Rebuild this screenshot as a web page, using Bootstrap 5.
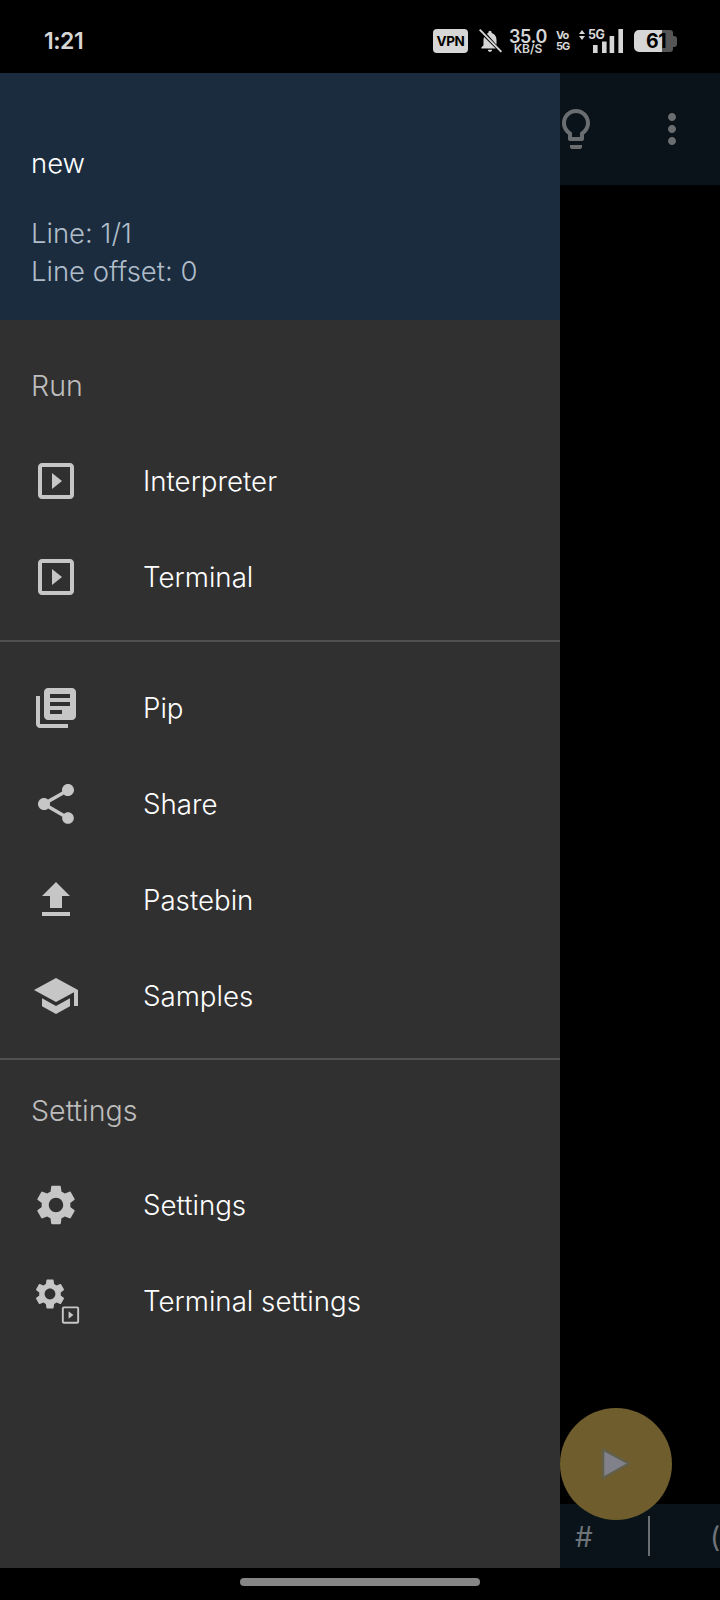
<!DOCTYPE html>
<html lang="en">
<head>
    <meta charset="UTF-8">
    <meta name="viewport" content="width=device-width, initial-scale=1.0">
    <title>Drawer</title>
    <link href="https://cdn.jsdelivr.net/npm/bootstrap@5.3.0/dist/css/bootstrap.min.css" rel="stylesheet">
    <style>
        html, body { background: #000; }
        body { font-family: Inter, "Liberation Sans", sans-serif; }
        .phone { width: 720px; height: 1600px; overflow: hidden; background: #000; }
        .status-bar { height: 73px; padding: 9px 43px 0 44px; color: #d6d6d6; }
        .clock { font-size: 23px; font-weight: 600; letter-spacing: -.5px; }
        .vpn-tag { width: 35px; height: 24px; margin-right: 9px; background: #d6d6d6; color: #000; border-radius: 4px; font-size: 13.5px; font-weight: 700; letter-spacing: -.3px; line-height: 24px; text-align: center; }
        .bell-off { margin-right: 6px; }
        .speed { width: 38px; margin-right: 9px; text-align: center; font-weight: 600; white-space: nowrap; }
        .speed-num { font-size: 18px; line-height: 15px; letter-spacing: -.4px; }
        .speed-unit { font-size: 12px; line-height: 10px; }
        .volte { width: 12px; margin-right: 11px; font-size: 11px; font-weight: 700; letter-spacing: -1px; line-height: 11px; text-align: center; white-space: nowrap; }
        .net-arrows { margin: 0 3px 12px 0; }
        .net-type { width: 16px; margin: 0 -11px 13px 0; font-size: 12.500px; font-weight: 700; letter-spacing: -.6px; line-height: 11px; white-space: nowrap; }
        .batt { width: 39px; height: 22px; margin-left: 11px; border-radius: 5px 3px 3px 5px; background: linear-gradient(90deg, #d6d6d6 72%, #555 72%); color: #000; font-size: 19.500px; font-weight: 700; line-height: 22px; padding-left: 12px; letter-spacing: -.5px; }
        .batt-nub { width: 4px; height: 11px; background: #555; border-radius: 0 3px 3px 0; }
        .drawer { width: 560px; background: #303030; }
        .drawer-head { height: 247px; padding: 73px 31px 0; background: #1a2c3e; color: #fff; }
        .drawer-title { font-size: 27.500px; font-weight: 300; line-height: 34px; margin-bottom: 34px; }
        .drawer-info { font-size: 27.500px; font-weight: 300; line-height: 38px; color: #b0bcc9; }
        .sub-label { font-size: 28.600px; font-weight: 300; color: #bdbdbd; padding-left: 31px; line-height: 34px; }
        .run-label { padding-top: 49px; padding-bottom: 30px; }
        .settings-label { padding-top: 34px; padding-bottom: 29px; }
        .menu-row { height: 96px; padding-left: 32px; color: #fff; font-size: 27.700px; font-weight: 350; }
        .menu-row > svg { width: 48px; height: 48px; margin-right: 63px; fill: #c6c6c6; flex: none; }
        .menu-row > span { padding-top: 2px; }
        .rule-line { height: 2px; background: #505050; }
        .rule-run { margin: 15px 0 18px; }
        .rule-tools { margin: 14px 0 0; }
        .side-col { width: 160px; }
        .side-bar { height: 112px; background: #0a1319; }
        .side-bar svg { width: 48px; height: 48px; fill: #6b6e71; position: absolute; top: 32px; }
        .bulb { left: -8px; }
        .dots { left: 88px; }
        .key-bar { height: 64px; background: #0a1319; color: #6e7378; font-size: 28px; overflow: hidden; }
        .key-hash { position: absolute; left: 15px; top: 15px; line-height: 36px; }
        .key-sep { position: absolute; left: 88px; top: 12px; width: 2px; height: 40px; background: #6a6f74; }
        .key-paren { position: absolute; left: 150px; top: 15px; line-height: 36px; }
        .run-fab { position: absolute; left: 0; bottom: 48px; width: 112px; height: 112px; border-radius: 50%; background: #6f5d2e; }
        .run-fab svg { width: 48px; height: 48px; }
        .gesture-zone { height: 32px; padding-bottom: 4px; }
        .gesture-pill { width: 240px; height: 8px; border-radius: 4px; background: #868686; }
    </style>
</head>
<body>
    <div class="phone d-flex flex-column">
        <!-- status bar -->
        <div class="status-bar d-flex align-items-center justify-content-between">
            <span class="clock">1:21</span>
            <div class="d-flex align-items-center">
                <span class="vpn-tag">VPN</span>
                <svg class="bell-off" width="26" height="26" viewBox="0 0 24 24" fill="#d6d6d6"><path d="M12 22c1.100 0 2-.9 2-2h-4c0 1.100.9 2 2 2zM18 16v-5c0-3.100-1.600-5.600-4.500-6.300V4c0-.8-.7-1.500-1.500-1.500s-1.500.7-1.500 1.500v.7c-.5.1-1 .3-1.400.6L18 15.500V16zM6.500 8.200C6.200 9.100 6 10 6 11v5l-2 2v1h13.300z"/><path d="M2.500 1.500L22.500 22" stroke="#d6d6d6" stroke-width="1.800"/></svg>
                <div class="speed d-flex flex-column"><span class="speed-num">35.0</span><span class="speed-unit">KB/S</span></div>
                <div class="volte d-flex flex-column"><span>Vo</span><span>5G</span></div>
                <svg class="net-arrows" width="6" height="10" viewBox="0 0 6 10" fill="#d6d6d6"><path d="M3 0l3 4H0zM3 10L0 6h6z"/></svg>
                <span class="net-type">5G</span>
                <svg width="30" height="24" viewBox="0 0 30 24" fill="#d6d6d6"><rect x="0" y="16" width="4.600" height="8"/><rect x="9" y="12.500" width="4.600" height="11.500"/><rect x="16.600" y="7" width="4.600" height="17"/><rect x="25.400" y="0" width="4.600" height="24"/></svg>
                <div class="batt">61</div>
                <div class="batt-nub"></div>
            </div>
        </div>

        <div class="d-flex flex-grow-1">
            <!-- drawer -->
            <div class="drawer d-flex flex-column">
                <div class="drawer-head">
                    <div class="drawer-title">new</div>
                    <div class="drawer-info">Line: 1/1</div>
                    <div class="drawer-info">Line offset: 0</div>
                </div>

                <div class="sub-label run-label">Run</div>
                <div class="menu-row d-flex align-items-center">
                    <svg viewBox="0 0 24 24"><path d="M10 8v8l5-4-5-4zm9-5H5c-1.100 0-2 .9-2 2v14c0 1.100.9 2 2 2h14c1.100 0 2-.9 2-2V5c0-1.100-.9-2-2-2zm0 16H5V5h14v14z"/></svg>
                    <span>Interpreter</span>
                </div>
                <div class="menu-row d-flex align-items-center">
                    <svg viewBox="0 0 24 24"><path d="M10 8v8l5-4-5-4zm9-5H5c-1.100 0-2 .9-2 2v14c0 1.100.9 2 2 2h14c1.100 0 2-.9 2-2V5c0-1.100-.9-2-2-2zm0 16H5V5h14v14z"/></svg>
                    <span>Terminal</span>
                </div>
                <div class="rule-line rule-run"></div>

                <div class="menu-row d-flex align-items-center">
                    <svg viewBox="0 0 24 24"><path d="M4 6H2v14c0 1.100.9 2 2 2h14v-2H4V6zm16-4H8c-1.100 0-2 .9-2 2v12c0 1.100.9 2 2 2h12c1.100 0 2-.9 2-2V4c0-1.100-.9-2-2-2zm-1 9H9V9h10v2zm-4 4H9v-2h6v2zm4-8H9V5h10v2z"/></svg>
                    <span>Pip</span>
                </div>
                <div class="menu-row d-flex align-items-center">
                    <svg viewBox="0 0 24 24"><path d="M18 16.080c-.76 0-1.440.3-1.960.77L8.910 12.700c.05-.23.09-.46.09-.7s-.04-.47-.09-.7l7.050-4.110c.54.5 1.250.81 2.040.81 1.660 0 3-1.340 3-3s-1.340-3-3-3-3 1.340-3 3c0 .24.04.47.09.7L8.040 9.810C7.500 9.310 6.790 9 6 9c-1.660 0-3 1.340-3 3s1.340 3 3 3c.79 0 1.500-.31 2.040-.81l7.120 4.160c-.05.21-.08.43-.08.65 0 1.610 1.310 2.920 2.920 2.920 1.610 0 2.920-1.310 2.920-2.920s-1.310-2.920-2.920-2.920z"/></svg>
                    <span>Share</span>
                </div>
                <div class="menu-row d-flex align-items-center">
                    <svg viewBox="0 0 24 24"><path d="M9 16h6v-6h4l-7-7-7 7h4zm-4 2h14v2H5z"/></svg>
                    <span>Pastebin</span>
                </div>
                <div class="menu-row d-flex align-items-center">
                    <svg viewBox="0 0 24 24"><path d="M5 13.180v4L12 21l7-3.820v-4L12 17l-7-3.820zM12 3L1 9l11 6 9-4.910V17h2V9L12 3z"/></svg>
                    <span>Samples</span>
                </div>
                <div class="rule-line rule-tools"></div>

                <div class="sub-label settings-label">Settings</div>
                <div class="menu-row d-flex align-items-center">
                    <svg viewBox="0 0 24 24"><path d="M19.140 12.940c.04-.3.06-.61.06-.94 0-.32-.02-.64-.07-.94l2.030-1.580c.18-.14.23-.41.12-.61l-1.920-3.320c-.12-.22-.37-.29-.59-.22l-2.390.96c-.5-.38-1.030-.7-1.620-.94l-.36-2.540c-.04-.24-.24-.41-.48-.41h-3.840c-.24 0-.43.17-.47.41l-.36 2.540c-.59.24-1.130.57-1.620.94l-2.390-.96c-.22-.08-.47 0-.59.22L2.740 8.870c-.12.21-.08.47.12.61l2.030 1.580c-.05.3-.09.63-.09.94s.02.64.07.94l-2.030 1.580c-.18.14-.23.41-.12.61l1.920 3.320c.12.22.37.29.59.22l2.390-.96c.5.38 1.030.7 1.620.94l.36 2.540c.05.24.24.41.48.41h3.840c.24 0 .44-.17.47-.41l.36-2.540c.59-.24 1.130-.56 1.620-.94l2.390.96c.22.08.47 0 .59-.22l1.920-3.320c.12-.22.07-.47-.12-.61l-2.010-1.580zM12 15.600c-1.980 0-3.600-1.620-3.600-3.600s1.620-3.600 3.600-3.600 3.600 1.620 3.600 3.600-1.620 3.600-3.600 3.600z"/></svg>
                    <span>Settings</span>
                </div>
                <div class="menu-row d-flex align-items-center">
                    <svg viewBox="0 0 48 48">
                        <svg x="0" y="-1" width="36" height="36" viewBox="0 0 24 24"><path d="M19.140 12.940c.04-.3.06-.61.06-.94 0-.32-.02-.64-.07-.94l2.030-1.580c.18-.14.23-.41.12-.61l-1.920-3.320c-.12-.22-.37-.29-.59-.22l-2.390.96c-.5-.38-1.030-.7-1.620-.94l-.36-2.540c-.04-.24-.24-.41-.48-.41h-3.840c-.24 0-.43.17-.47.41l-.36 2.540c-.59.24-1.130.57-1.620.94l-2.390-.96c-.22-.08-.47 0-.59.22L2.740 8.870c-.12.21-.08.47.12.61l2.030 1.580c-.05.3-.09.63-.09.94s.02.64.07.94l-2.030 1.580c-.18.14-.23.41-.12.61l1.920 3.320c.12.22.37.29.59.22l2.390-.96c.5.38 1.030.7 1.620.94l.36 2.540c.05.24.24.41.48.41h3.840c.24 0 .44-.17.47-.41l.36-2.540c.59-.24 1.130-.56 1.620-.94l2.390.96c.22.08.47 0 .59-.22l1.920-3.320c.12-.22.07-.47-.12-.61l-2.010-1.580zM12 15.600c-1.980 0-3.600-1.620-3.600-3.600s1.620-3.600 3.600-3.600 3.600 1.620 3.600 3.600-1.620 3.600-3.600 3.600z"/></svg>
                        <svg x="27" y="26.500" width="23" height="23" viewBox="0 0 24 24"><path d="M10 8v8l5-4-5-4zm9-5H5c-1.100 0-2 .9-2 2v14c0 1.100.9 2 2 2h14c1.100 0 2-.9 2-2V5c0-1.100-.9-2-2-2zm0 16H5V5h14v14z"/></svg>
                    </svg>
                    <span>Terminal settings</span>
                </div>
            </div>

            <!-- dimmed editor behind the drawer -->
            <div class="side-col d-flex flex-column position-relative">
                <div class="side-bar position-relative">
                    <svg class="bulb" viewBox="0 0 24 24"><path d="M9 21c0 .55.45 1 1 1h4c.55 0 1-.45 1-1v-1H9v1zm3-19C8.140 2 5 5.140 5 9c0 2.380 1.190 4.470 3 5.740V17c0 .55.45 1 1 1h6c.55 0 1-.45 1-1v-2.260c1.810-1.270 3-3.360 3-5.740 0-3.860-3.140-7-7-7zm2.850 11.100l-.85.6V16h-4v-2.300l-.85-.6C7.800 12.160 7 10.630 7 9c0-2.760 2.240-5 5-5s5 2.240 5 5c0 1.630-.8 3.160-2.150 4.100z"/></svg>
                    <svg class="dots" viewBox="0 0 24 24"><path d="M12 8c1.100 0 2-.9 2-2s-.9-2-2-2-2 .9-2 2 .9 2 2 2zm0 2c-1.100 0-2 .9-2 2s.9 2 2 2 2-.9 2-2-.9-2-2-2zm0 6c-1.100 0-2 .9-2 2s.9 2 2 2 2-.9 2-2-.9-2-2-2z"/></svg>
                </div>
                <div class="flex-grow-1"></div>
                <div class="key-bar position-relative">
                    <span class="key-hash">#</span>
                    <span class="key-sep"></span>
                    <span class="key-paren">(</span>
                </div>
                <div class="run-fab d-flex align-items-center justify-content-center">
                    <svg viewBox="0 0 48 48"><path d="M11 9.500L37 23.500 11 38z" fill="#80818a" stroke="#625f4a" stroke-width="2.500" stroke-linejoin="round"/></svg>
                </div>
            </div>
        </div>

        <!-- gesture bar -->
        <div class="gesture-zone d-flex align-items-center justify-content-center">
            <div class="gesture-pill"></div>
        </div>
    </div>
    <script src="https://cdn.jsdelivr.net/npm/bootstrap@5.3.0/dist/js/bootstrap.bundle.min.js"></script>
</body>
</html>
